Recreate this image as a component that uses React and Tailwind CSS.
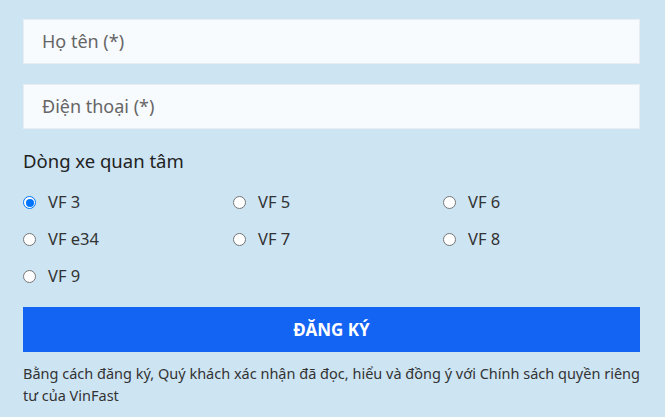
const models = ["VF 3", "VF 5", "VF 6", "VF e34", "VF 7", "VF 8", "VF 9"];

function Radio({ checked }) {
  return checked ? (
    <span className="flex h-[13px] w-[13px] items-center justify-center rounded-full border border-[#0075ff] bg-white">
      <span className="h-[8px] w-[8px] rounded-full bg-[#0075ff]" />
    </span>
  ) : (
    <span className="h-[13px] w-[13px] rounded-full border border-[#767676] bg-white" />
  );
}

export default function App() {
  return (
    <div className="min-h-[417px] bg-[#cde4f3] px-[23px] pt-[19px] font-['Noto_Sans',sans-serif] text-[#333]">
      <div className="w-[617px]">
        <div className="flex h-[45px] items-center border border-[#e6eef3] bg-[#f8fbfe] px-[18px] text-[18px] text-[#666]">
          Họ tên (*)
        </div>
        <div className="mt-[20px] flex h-[45px] items-center border border-[#e6eef3] bg-[#f8fbfe] px-[18px] text-[18px] text-[#666]">
          Điện thoại (*)
        </div>
        <div className="mt-[18px] text-[18.5px] leading-[27px] text-[#222]">Dòng xe quan tâm</div>
        <div className="mt-[10px] grid grid-cols-[210px_210px_210px]">
          {models.map((m, i) => (
            <label key={m} className="flex h-[37px] items-center gap-[12px] text-[16.5px]">
              <Radio checked={i === 0} />
              <span>{m}</span>
            </label>
          ))}
        </div>
        <button className="mt-[12px] flex h-[45px] w-full items-center justify-center bg-[#1464f4] text-[17px] font-bold text-white">
          ĐĂNG KÝ
        </button>
        <p className="mt-[10px] text-[14.5px] leading-[22px] text-[#333]">
          Bằng cách đăng ký, Quý khách xác nhận đã đọc, hiểu và đồng ý với Chính sách quyền riêng tư của VinFast
        </p>
      </div>
    </div>
  );
}
